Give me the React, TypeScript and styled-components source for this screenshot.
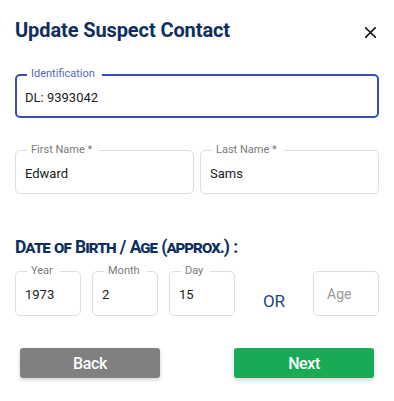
import React from "react";
import styled, { createGlobalStyle } from "styled-components";

const Global = createGlobalStyle`
  html, body { margin: 0; padding: 0; background: #ffffff; }
  body { font-family: Roboto, "Noto Sans", Arial, sans-serif; color: #212121; }
  * { box-sizing: border-box; }
`;

const Dialog = styled.div`
  width: 394px;
  height: 401px;
  padding: 0 15px;
  background: #fff;
  overflow: hidden;
`;

const Header = styled.div`
  margin-top: 19px;
  height: 23px;
  display: flex;
  align-items: center;
  justify-content: space-between;
`;

const Title = styled.h1`
  margin: 0;
  font-size: 20px;
  line-height: 23px;
  font-weight: 700;
  color: #0d2f5e;
  letter-spacing: -0.1px;
`;

const CloseButton = styled.button`
  border: 0;
  background: none;
  padding: 0;
  width: 11px;
  height: 11px;
  margin-right: 3px;
  margin-top: 4px;
  display: flex;
  cursor: pointer;
`;

const Field = styled.div<{ $focused?: boolean; $width?: string }>`
  position: relative;
  height: 44px;
  width: ${(p) => p.$width || "auto"};
  flex: ${(p) => (p.$width ? "none" : "1")};
  border: ${(p) => (p.$focused ? "2px solid #3a4db5" : "1px solid #dedede")};
  border-radius: 5px;
  display: flex;
  align-items: center;
  padding: 3px 0 0 ${(p) => (p.$focused ? "8px" : "9px")};
`;

const FieldLabel = styled.span<{ $focused?: boolean }>`
  position: absolute;
  top: ${(p) => (p.$focused ? "-9px" : "-8px")};
  left: ${(p) => (p.$focused ? "10px" : "11px")};
  padding: 0 7px 0 4px;
  background: #fff;
  font-size: 11px;
  line-height: 13px;
  color: ${(p) => (p.$focused ? "#5466c9" : "#7a7a7a")};
`;

const FieldValue = styled.span<{ $placeholder?: boolean }>`
  font-size: ${(p) => (p.$placeholder ? "14px" : "13px")};
  line-height: 16px;
  color: ${(p) => (p.$placeholder ? "#9a9a9a" : "#212121")};
  padding-left: ${(p) => (p.$placeholder ? "4px" : "0")};
  margin-top: ${(p) => (p.$placeholder ? "-3px" : "0")};
`;

const IdRow = styled.div`
  margin-top: 32px;
  display: flex;
`;

const NameRow = styled.div`
  margin-top: 32px;
  display: flex;
  gap: 6px;
`;

const SectionHeading = styled.h2`
  margin: 42px 0 0;
  font-size: 17.5px;
  line-height: 22px;
  font-weight: 700;
  font-variant: small-caps;
  letter-spacing: -1px;
  word-spacing: 1px;
  color: #0d2f5e;
`;

const DobRow = styled.div`
  margin-top: 13px;
  display: flex;
  gap: 11px;
  align-items: flex-start;
`;

const DobField = styled(Field)`
  height: 45px;
`;

const Or = styled.div`
  flex: 1;
  text-align: center;
  font-size: 17px;
  line-height: 20px;
  color: #22477d;
  padding-top: 20px;
`;

const ButtonRow = styled.div`
  margin-top: 32px;
  padding: 0 5px;
  display: flex;
  justify-content: space-between;
`;

const ActionButton = styled.button<{ $variant: "back" | "next" }>`
  width: 140px;
  height: 30px;
  border: 0;
  border-radius: 3px;
  background: ${(p) => (p.$variant === "next" ? "#19aa55" : "#808080")};
  color: #fff;
  font-family: Roboto, Arial, sans-serif;
  font-size: 16px;
  font-weight: 500;
  letter-spacing: -0.4px;
  box-shadow: 0 2px 4px rgba(0, 0, 0, 0.18);
  cursor: pointer;
`;

function CloseIcon() {
  return (
    <svg width="11" height="11" viewBox="0 0 11 11">
      <path d="M0.7 0.7 L10.3 10.3 M10.3 0.7 L0.7 10.3" stroke="#111" strokeWidth="1.6" strokeLinecap="square" />
    </svg>
  );
}

export default function App() {
  return (
    <>
      <Global />
      <Dialog>
        <Header>
          <Title>Update Suspect Contact</Title>
          <CloseButton aria-label="Close">
            <CloseIcon />
          </CloseButton>
        </Header>

        <IdRow>
          <Field $focused>
            <FieldLabel $focused>Identification</FieldLabel>
            <FieldValue>DL: 9393042</FieldValue>
          </Field>
        </IdRow>

        <NameRow>
          <Field>
            <FieldLabel>First Name *</FieldLabel>
            <FieldValue>Edward</FieldValue>
          </Field>
          <Field>
            <FieldLabel>Last Name *</FieldLabel>
            <FieldValue>Sams</FieldValue>
          </Field>
        </NameRow>

        <SectionHeading>Date of Birth / Age (approx.) :</SectionHeading>

        <DobRow>
          <DobField $width="66px">
            <FieldLabel>Year</FieldLabel>
            <FieldValue>1973</FieldValue>
          </DobField>
          <DobField $width="66px">
            <FieldLabel>Month</FieldLabel>
            <FieldValue>2</FieldValue>
          </DobField>
          <DobField $width="66px">
            <FieldLabel>Day</FieldLabel>
            <FieldValue>15</FieldValue>
          </DobField>
          <Or>OR</Or>
          <DobField $width="66px">
            <FieldValue $placeholder>Age</FieldValue>
          </DobField>
        </DobRow>

        <ButtonRow>
          <ActionButton $variant="back">Back</ActionButton>
          <ActionButton $variant="next">Next</ActionButton>
        </ButtonRow>
      </Dialog>
    </>
  );
}
